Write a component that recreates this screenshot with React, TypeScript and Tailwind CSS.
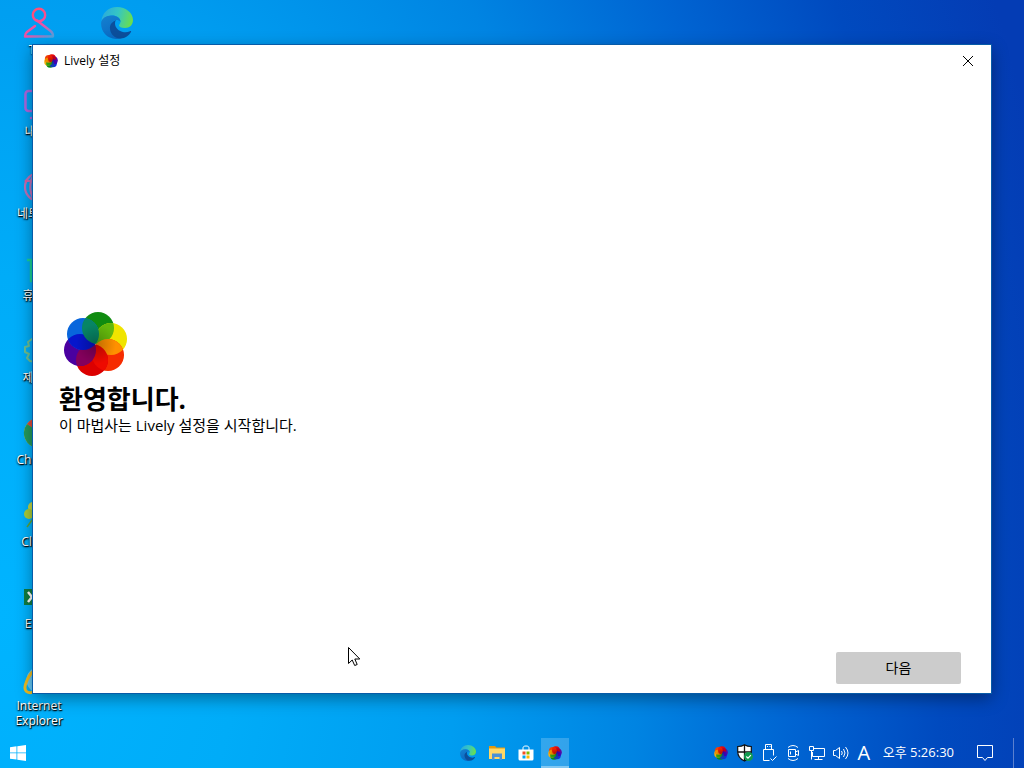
import { useId, type ReactNode } from "react";

type Petal = { cx: number; cy: number; fill: string; overlap: string };

// overlap is the colour shared with the next petal, clockwise
const logoPetals: Petal[] = [
  { cx: 34, cy: 16, fill: "#108c10", overlap: "#64b80c" },
  { cx: 47, cy: 27, fill: "#f0e400", overlap: "#ff9000" },
  { cx: 44, cy: 43, fill: "#f62c00", overlap: "#ee0a00" },
  { cx: 28, cy: 48, fill: "#dc0000", overlap: "#83005c" },
  { cx: 16, cy: 38, fill: "#4a00a0", overlap: "#0616cc" },
  { cx: 19, cy: 22, fill: "#0866dc", overlap: "#078565" },
];

const appPetals: Petal[] = [
  { cx: 36, cy: 19, fill: "#e80808", overlap: "#c00018" },
  { cx: 45, cy: 29, fill: "#5a08a0", overlap: "#4400b0" },
  { cx: 41, cy: 42, fill: "#1030d8", overlap: "#1040b0" },
  { cx: 28, cy: 45, fill: "#088a18", overlap: "#30a010" },
  { cx: 19, cy: 35, fill: "#f0b010", overlap: "#f09000" },
  { cx: 22, cy: 22, fill: "#f04008", overlap: "#f02000" },
];

type FlowerProps = { petals: Petal[]; radius: number; className: string };

function Flower({ petals, radius, className }: FlowerProps) {
  const id = useId();
  return (
    <svg viewBox="0 0 64 64" className={className} aria-hidden="true">
      <defs>
        {petals.map((p, i) => (
          <clipPath key={i} id={`${id}-${i}`}>
            <circle cx={p.cx} cy={p.cy} r={radius} />
          </clipPath>
        ))}
        <radialGradient
          id={`${id}-shade`}
          gradientUnits="userSpaceOnUse"
          cx="32"
          cy="32"
          r="20"
        >
          <stop offset="0" stopOpacity="0.25" />
          <stop offset="1" stopOpacity="0" />
        </radialGradient>
      </defs>
      {petals.map((p, i) => (
        <circle key={i} cx={p.cx} cy={p.cy} r={radius} fill={p.fill} />
      ))}
      {petals.map((p, i) => {
        const next = petals[(i + 1) % petals.length];
        return (
          <g key={i} clipPath={`url(#${id}-${i})`}>
            <circle cx={next.cx} cy={next.cy} r={radius} fill={p.overlap} />
            <circle
              cx={next.cx}
              cy={next.cy}
              r={radius}
              fill={`url(#${id}-shade)`}
            />
          </g>
        );
      })}
    </svg>
  );
}

function AppIcon() {
  return <Flower petals={appPetals} radius={18} className="size-3.5" />;
}

function EdgeIcon({ className }: { className: string }) {
  const id = useId();
  return (
    <svg viewBox="0 0 32 32" className={className} aria-hidden="true">
      <defs>
        <linearGradient id={`${id}-top`} x1="0" y1="0.3" x2="1" y2="0.5">
          <stop offset="0" stopColor="#2aa9dc" />
          <stop offset="0.5" stopColor="#35c6c4" />
          <stop offset="1" stopColor="#6bdf4c" />
        </linearGradient>
        <linearGradient id={`${id}-left`} x1="0" y1="0" x2="0.4" y2="1">
          <stop offset="0" stopColor="#1581d0" />
          <stop offset="1" stopColor="#0a6bc4" />
        </linearGradient>
      </defs>
      <path
        d="M0.5 14C1 6 7.500 0 16 0c9 0 16 6 16 13 0 5-3.500 8-8 8-4 0-6-1.500-6-2.500s1.500-1.500 1.500-4c0-3.500-3.500-6-8-6C6 8.500 2 11 0.500 14Z"
        fill={`url(#${id}-top)`}
      />
      <path
        d="M15 32C6 31.500 0 25 .1 16 .5 11.500 5 8.500 10.500 8.500c5 0 9 2.500 9 6.500-1-1.500-2.500-2-4-2-3.500 0-5.500 3-5.500 7 0 6 5 11 11 11.200-2 .6-4 .9-6 .8Z"
        fill={`url(#${id}-left)`}
      />
      <path
        d="M15 13c-4 1.500-6.500 5-6 9 .6 5.500 5 9.500 10.500 9.500 5 0 8.500-3 10.500-6.500.4-.8-.3-1.200-1-.8-2 1-4 1.300-6 1-5.500-.8-9-4.700-9-8.700 0-1.500.4-2.800 1-3.500Z"
        fill="#0c4f9c"
      />
    </svg>
  );
}

function UserIcon() {
  return (
    <svg
      viewBox="0 0 32 32"
      className="size-8"
      fill="none"
      stroke="url(#user-line)"
      strokeWidth="2.400"
      strokeLinecap="round"
      strokeLinejoin="round"
      aria-hidden="true"
    >
      <defs>
        <linearGradient
          id="user-line"
          gradientUnits="userSpaceOnUse"
          x1="12"
          y1="4"
          x2="30"
          y2="31"
        >
          <stop offset="0" stopColor="#ff4f78" />
          <stop offset="0.5" stopColor="#ee50a8" />
          <stop offset="1" stopColor="#46a8e0" />
        </linearGradient>
      </defs>
      <circle cx="16" cy="8" r="6.200" />
      <path d="M12 19 4 25c-1.500 1.300-2 2.500-2 4.500h28c.2-2.500-.5-4-2.500-5.500L14 13.500" />
    </svg>
  );
}

function MonitorIcon() {
  return (
    <svg
      viewBox="0 0 32 32"
      className="size-8"
      fill="none"
      stroke="#ad65df"
      strokeWidth="2.500"
      strokeLinecap="round"
      aria-hidden="true"
    >
      <rect x="2.500" y="2" width="27" height="20" rx="3" />
      <path d="M8 29h16" />
    </svg>
  );
}

function NetworkGlobeIcon() {
  return (
    <svg
      viewBox="0 0 32 32"
      className="size-8"
      fill="none"
      stroke="#c070b8"
      strokeWidth="2.200"
      aria-hidden="true"
    >
      <circle cx="16" cy="16" r="14" />
      <path d="M11 4c-5 7-5 17 0 24M4 10h24" />
      <circle cx="3" cy="10" r="1.500" fill="#e45a9d" stroke="none" />
    </svg>
  );
}

function BinIcon() {
  return (
    <svg
      viewBox="0 0 32 32"
      className="size-8"
      fill="none"
      stroke="#18d398"
      strokeWidth="2.400"
      aria-hidden="true"
    >
      <path d="M4 7h24M8 7v21h16V7M13 12v11M19 12v11" />
    </svg>
  );
}

function GearIcon() {
  return (
    <svg
      viewBox="0 0 32 32"
      className="size-8"
      fill="none"
      stroke="#6cc090"
      strokeWidth="2"
      strokeLinejoin="round"
      aria-hidden="true"
    >
      <path d="M13 5h6l1 4 4 1 3-2 3 4-2 4v4l2 4-3 4-3-2-4 1-1 3h-6l-1-3-5-1-3-3 2-4-4-2v-5l4-1-1-4 4-3 3 2Z" />
      <circle cx="16" cy="17" r="4" />
    </svg>
  );
}

function ChromeIcon() {
  return (
    <svg viewBox="0 0 32 32" className="size-8" aria-hidden="true">
      <circle cx="16" cy="16" r="15" fill="#f9c82d" />
      <path d="M16 16 4 7a15 15 0 0 1 26 3Z" fill="#df4b3e" />
      <path d="M4 7a15 15 0 0 0 11 24l4-14Z" fill="#249b5c" />
      <circle cx="18" cy="16" r="6.500" fill="#fff" />
      <circle cx="18" cy="16" r="5" fill="#3d84ef" />
    </svg>
  );
}

function CloverIcon() {
  return (
    <svg viewBox="0 0 32 32" className="size-8" aria-hidden="true">
      <path d="m12 17-8 11" stroke="#5fa832" strokeWidth="1.500" />
      <circle cx="10" cy="8" r="5" fill="#c3d743" />
      <circle cx="20" cy="12" r="6" fill="#b3cf3a" />
      <circle cx="6" cy="15" r="5" fill="#a9cd38" />
    </svg>
  );
}

function ExcelIcon() {
  return (
    <svg viewBox="0 0 32 32" className="size-8" aria-hidden="true">
      <path d="M9 2h21v28H9Z" fill="#18794a" />
      <path d="M1 8h18v16H1Z" fill="#107c41" />
      <path d="m5 11 8 10m0-10L5 21" stroke="#fff" strokeWidth="2.500" />
    </svg>
  );
}

function ExplorerIcon() {
  return (
    <svg viewBox="0 0 32 32" className="size-8" aria-hidden="true">
      <circle
        cx="17"
        cy="17"
        r="11"
        fill="none"
        stroke="#67c9f5"
        strokeWidth="5"
      />
      <path d="M8 17h20" stroke="#67c9f5" strokeWidth="4" />
      <path
        d="M11 29c-7 2-11-1-8-9C6 11 13 3 26 3"
        fill="none"
        stroke="#eebd23"
        strokeWidth="3"
      />
    </svg>
  );
}

function FolderIcon() {
  return (
    <svg viewBox="0 0 16 14" className="w-4" aria-hidden="true">
      <path d="M0 0h6l1.500 1.500H16V13H0Z" fill="#e29a10" />
      <path d="M0 2.500h16V13H0Z" fill="#ffd867" />
      <path d="M3 14V7.500h10V14h-2.500v-3h-5v3Z" fill="#4a91d7" />
    </svg>
  );
}

function StoreIcon() {
  return (
    <svg viewBox="0 0 16 16" className="size-4" aria-hidden="true">
      <path
        d="M5 5V3c0-1.500 1-2 3-2s3 .5 3 2v2"
        fill="none"
        stroke="#fff"
      />
      <path d="M.5 4.500h15V14q0 1.500-1.500 1.500H2Q.5 15.500.5 14Z" fill="#fff" />
      <path d="M4.500 6.500h3v3h-3z" fill="#f25022" />
      <path d="M8.500 6.500h3v3h-3z" fill="#7fba00" />
      <path d="M4.500 10.500h3v3h-3z" fill="#00a4ef" />
      <path d="M8.500 10.500h3v3h-3z" fill="#ffb900" />
    </svg>
  );
}

function StartIcon() {
  return (
    <svg viewBox="0 0 16 16" className="size-4" fill="#fff" aria-hidden="true">
      <path d="M0 2.200 6.500 1.300v6.200H0ZM7.300 1.200 16 0v7.500H7.300ZM0 8.300h6.500v6.300L0 13.700ZM7.300 8.300H16V16l-8.700-1.300Z" />
    </svg>
  );
}

function ShieldIcon() {
  return (
    <svg viewBox="0 0 16 18" className="w-4" aria-hidden="true">
      <path
        d="M7.500.7C5.500 2 3.500 2.500.7 2.500v5C.7 12 3 15 7.500 17c4.500-2 6.800-5 6.800-9.500v-5C11.500 2.500 9.500 2 7.500.7Z"
        fill="#fff"
        stroke="#111"
        strokeWidth="1.200"
      />
      <path d="M7.500 1v16M.7 8h13.600" stroke="#111" strokeWidth="1.300" />
      <circle cx="11.500" cy="12.500" r="4.500" fill="#119b50" />
      <path
        d="m9.300 12.500 1.700 1.700 2.900-3"
        fill="none"
        stroke="#fff"
        strokeWidth="1.200"
      />
    </svg>
  );
}

function TrayLine({ children }: { children: ReactNode }) {
  return (
    <svg
      viewBox="0 0 18 18"
      className="size-[18px]"
      fill="none"
      stroke="#fff"
      strokeWidth="1"
      aria-hidden="true"
    >
      {children}
    </svg>
  );
}

const shortcuts = [
  { label: "Ted", icon: <UserIcon /> },
  { label: "내 PC", icon: <MonitorIcon /> },
  { label: "네트워크", icon: <NetworkGlobeIcon /> },
  { label: "휴지통", icon: <BinIcon /> },
  { label: "제어판", icon: <GearIcon /> },
  { label: "Chrome", icon: <ChromeIcon /> },
  { label: "Clover", icon: <CloverIcon /> },
  { label: "Excel", icon: <ExcelIcon /> },
  { label: "Internet Explorer", icon: <ExplorerIcon /> },
  { label: "", icon: <EdgeIcon className="size-8" /> },
];

const pinned = [
  { label: "Edge", icon: <EdgeIcon className="size-4" />, active: false },
  { label: "파일 탐색기", icon: <FolderIcon />, active: false },
  { label: "Store", icon: <StoreIcon />, active: false },
  { label: "Lively", icon: <AppIcon />, active: true },
];

const tray = [
  { label: "Lively", icon: <AppIcon /> },
  { label: "보안", icon: <ShieldIcon /> },
  {
    label: "USB",
    icon: (
      <TrayLine>
        <path d="M5.500 5.500v-5h6v5M9.500 16.500h-6v-11h10v6M7 2.500h1M9.500 2.500h1M10.500 14.500l2 2 4-4" />
      </TrayLine>
    ),
  },
  {
    label: "카메라",
    icon: (
      <TrayLine>
        <path d="M4 3.500q5-4 10 0M4 14.500q5 4 10 0M4.500 5.500h7v7h-7zM11.500 8l3-1.500v5l-3-1.500" />
        <path d="M6.500 7.500v3" />
      </TrayLine>
    ),
  },
  {
    label: "네트워크",
    icon: (
      <TrayLine>
        <path d="M5.500 4.500h11v8h-12V8M1.500 2.500h4v4h-4zM3.500 6.500v9M10.500 12.500v3M6.500 15.500h8" />
      </TrayLine>
    ),
  },
  {
    label: "볼륨",
    icon: (
      <TrayLine>
        <path d="M1.500 6.500h2l4-3v11l-4-3h-2zM9.500 7q1.500 2 0 4M11.500 5q3 4 0 8M13.500 3q5 6 0 12" />
      </TrayLine>
    ),
  },
];

function Shortcut({ label, icon }: { label: string; icon: ReactNode }) {
  return (
    <a
      href="#"
      className="flex h-[82px] w-[78px] flex-col items-center gap-[3px] px-2 pt-[7px] text-center text-xs leading-[15px] text-white [text-shadow:0_1px_2px_#000,1px_1px_1px_#000]"
    >
      {icon}
      {label}
    </a>
  );
}

function SetupWindow() {
  return (
    <section className="absolute top-[45px] right-[33px] bottom-[75px] left-[33px] flex flex-col bg-white text-black shadow-[0_5px_16px_rgba(0,0,0,0.4)] outline outline-1 outline-[#075ba8]">
      <header className="flex h-8 items-center justify-between pl-[11px]">
        <div className="flex items-center gap-1.5 text-xs">
          <AppIcon />
          <span>Lively 설정</span>
        </div>
        <button
          type="button"
          aria-label="닫기"
          className="flex h-8 w-[46px] items-center justify-center"
        >
          <svg viewBox="0 0 10 10" className="size-2.5" stroke="#000">
            <path d="m0 0 10 10M10 0 0 10" />
          </svg>
        </button>
      </header>
      <main className="flex flex-1 flex-col justify-center px-[26px] pt-4">
        <Flower
          petals={logoPetals}
          radius={16}
          className="ml-[5px] size-16"
        />
        <h1 className="mt-1.5 text-[26px] leading-[34px] font-bold">
          환영합니다.
        </h1>
        <p className="text-[15px] leading-[18px]">
          이 마법사는 Lively 설정을 시작합니다.
        </p>
      </main>
      <footer className="flex justify-end pr-[30px] pb-[9px]">
        <button
          type="button"
          className="h-8 w-[125px] rounded-xs bg-[#cccccc] text-sm"
        >
          다음
        </button>
      </footer>
    </section>
  );
}

function Taskbar() {
  return (
    <footer className="grid h-[30px] grid-cols-[1fr_auto_1fr] text-white">
      <button type="button" aria-label="시작" className="w-9 pl-2.5">
        <StartIcon />
      </button>
      <nav className="flex pr-0.5">
        {pinned.map((app) => (
          <button
            key={app.label}
            type="button"
            aria-label={app.label}
            className={
              app.active
                ? "flex w-7 items-center justify-center border-b-2 border-[#83c8f2] bg-white/20 pt-0.5"
                : "flex w-[29px] items-center justify-center"
            }
          >
            {app.icon}
          </button>
        ))}
      </nav>
      <div className="flex items-center justify-end">
        {tray.map((item) => (
          <button
            key={item.label}
            type="button"
            aria-label={item.label}
            className="flex h-full w-6 items-center justify-center"
          >
            {item.icon}
          </button>
        ))}
        <span className="w-[22px] text-center text-xl leading-5">A</span>
        <time className="ml-2 text-[13px]">오후 5:26:30</time>
        <button type="button" aria-label="알림" className="mr-3 ml-[22px]">
          <TrayLine>
            <path d="M1.500 1.500h15v12h-5l-2.500 3-2.500-3h-5z" />
          </TrayLine>
        </button>
        <div className="mr-2.5 ml-[7px] h-full w-px bg-[#5b80cf]" />
      </div>
    </footer>
  );
}

export default function App() {
  return (
    <div
      lang="ko"
      className="relative flex h-screen flex-col overflow-hidden bg-[radial-gradient(ellipse_118%_220%_at_0%_80%,#00b4ff_0%,#00acf8_20%,#009df0_38%,#0084e2_53%,#0064d2_66%,#004abf_78%,#043cb4_90%)] [font-family:'Open_Sans','Noto_Sans_CJK_KR',sans-serif]"
    >
      <div className="flex min-h-0 flex-1 flex-col flex-wrap content-start">
        {shortcuts.map((item) => (
          <Shortcut key={item.label} {...item} />
        ))}
      </div>
      <SetupWindow />
      <Taskbar />
      <svg
        viewBox="0 0 12 20"
        className="absolute top-[647px] left-[348px] h-5 w-3"
        aria-hidden="true"
      >
        <path
          d="M.5.500v16l3.700-3.500 2.500 5.500 2.500-1L6.800 12h5Z"
          fill="#fff"
          stroke="#000"
        />
      </svg>
    </div>
  );
}
